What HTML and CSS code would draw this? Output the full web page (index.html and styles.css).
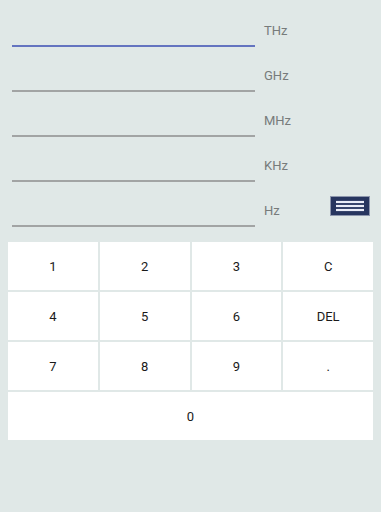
FILE: index.html
```html
<!DOCTYPE html>
<html>
<head>
<meta charset="utf-8">
<link rel="stylesheet" href="styles.css">
</head>
<body>
<div class="app">
  <div class="fields">
    <div class="row">
      <div class="field active"></div>
      <div class="unit">THz</div>
    </div>
    <div class="row">
      <div class="field"></div>
      <div class="unit">GHz</div>
    </div>
    <div class="row">
      <div class="field"></div>
      <div class="unit">MHz</div>
    </div>
    <div class="row">
      <div class="field"></div>
      <div class="unit">KHz</div>
    </div>
    <div class="row">
      <div class="field"></div>
      <div class="unit">Hz</div>
      <div class="menu-btn">
        <svg width="40" height="20" viewBox="0 0 40 20">
          <rect x="0.5" y="0.5" width="39" height="19" fill="#27355f" stroke="#8d96ad" stroke-width="1"/>
          <line x1="6" y1="6" x2="34" y2="6" stroke="#c9d0ea" stroke-width="2.2"/>
          <line x1="6" y1="10" x2="34" y2="10" stroke="#c9d0ea" stroke-width="2.2"/>
          <line x1="6" y1="14" x2="34" y2="14" stroke="#c9d0ea" stroke-width="2.2"/>
          <line x1="6" y1="6" x2="34" y2="6" stroke="#ffffff" stroke-width="1.2"/>
          <line x1="6" y1="10" x2="34" y2="10" stroke="#ffffff" stroke-width="1.2"/>
          <line x1="6" y1="14" x2="34" y2="14" stroke="#ffffff" stroke-width="1.2"/>
        </svg>
      </div>
    </div>
  </div>
  <div class="keypad">
    <div class="key">1</div>
    <div class="key">2</div>
    <div class="key">3</div>
    <div class="key">C</div>
    <div class="key">4</div>
    <div class="key">5</div>
    <div class="key">6</div>
    <div class="key">DEL</div>
    <div class="key">7</div>
    <div class="key">8</div>
    <div class="key">9</div>
    <div class="key">.</div>
    <div class="key wide">0</div>
  </div>
</div>
</body>
</html>
```

FILE: styles.css
```css
html, body {
  margin: 0;
  padding: 0;
  background: #e0e8e7;
  font-family: Roboto, "Liberation Sans", sans-serif;
}

.app {
  width: 381px;
  height: 512px;
  padding-top: 2px;
  box-sizing: border-box;
}

.fields {
  display: flex;
  flex-direction: column;
}

.row {
  display: flex;
  align-items: flex-start;
  height: 45px;
}

.field {
  width: 243px;
  height: 45px;
  margin-left: 12px;
  box-sizing: border-box;
  border-bottom: 2px solid #a2a4a4;
}

.field.active {
  border-bottom-color: #6474c0;
}

.unit {
  width: 66px;
  margin-left: 9px;
  margin-top: 21px;
  font-size: 13px;
  line-height: 15px;
  color: #777b7b;
}

.menu-btn {
  margin-top: 14px;
  margin-left: 0;
  width: 40px;
  height: 20px;
  display: flex;
}

.row .unit + .menu-btn {
  margin-top: 14px;
}

.keypad {
  margin: 15px 8px 0;
  display: grid;
  grid-template-columns: repeat(4, 1fr);
  grid-auto-rows: 48px;
  gap: 2px;
}

.key {
  background: #ffffff;
  display: flex;
  align-items: center;
  justify-content: center;
  font-size: 13px;
  color: #1a1a1a;
}

.key.wide {
  grid-column: 1 / 5;
}
```
